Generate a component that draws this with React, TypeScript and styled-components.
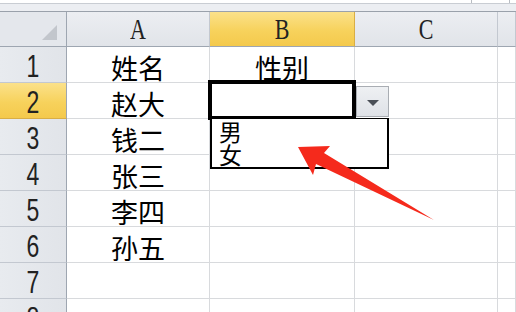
import { Fragment } from 'react';
import styled, { createGlobalStyle } from 'styled-components';

const GlobalStyle = createGlobalStyle`
    html, body {
        margin: 0;
        padding: 0;
        background: #ffffff;
        overflow: hidden;
    }
`;

const Sheet = styled.div`
    position: relative;
    width: 516px;
    height: 312px;
    overflow: hidden;
    background: #ffffff;
    font-family: "Liberation Sans", "Noto Sans CJK SC", sans-serif;
`;

const FormulaStrip = styled.div`
    height: 12px;
    box-sizing: border-box;
    background: linear-gradient(#ffffff 0 3px, #c9cdd3 3px 4px, #eceef2 4px);
    border-bottom: 1px solid #9aa1ab;
    display: flex;
    justify-content: flex-end;
    padding-right: 6px;
`;

const FormulaBox = styled.div`
    width: 37px;
    height: 3px;
    border-left: 1px solid #b8bcc2;
    border-right: 1px solid #b8bcc2;
    background: #ffffff;
`;

const Grid = styled.div`
    display: grid;
    grid-template-columns: 67px 143px 145px 143px 1fr;
    grid-template-rows: 35px;
    grid-auto-rows: 36px;
`;

const Corner = styled.div`
    position: relative;
    box-sizing: border-box;
    background: #e4e7ec;
    border-right: 1px solid #9ea6b1;
    border-bottom: 1px solid #9ea6b1;

    &::after {
        content: "";
        position: absolute;
        right: 9px;
        bottom: 6px;
        width: 0;
        height: 0;
        border-left: 15px solid transparent;
        border-bottom: 15px solid #c2c6cc;
    }
`;

const ColHeader = styled.div<{ $active?: boolean }>`
    box-sizing: border-box;
    display: flex;
    align-items: center;
    justify-content: center;
    background: ${p => p.$active
        ? 'linear-gradient(#fbe18a, #f7d25c 55%, #f4c94c)'
        : 'linear-gradient(#eceef2, #e1e4e9)'};
    border-right: 1px solid ${p => p.$active ? '#d9ae45' : '#c3c8d0'};
    border-bottom: 1px solid #9ea6b1;
    font-family: "Liberation Serif", serif;
    font-size: 22px;
    color: #222222;

    span {
        display: inline-block;
        transform: scaleY(1.35);
        margin-top: 2px;
    }
`;

const RowHeader = styled.div<{ $active?: boolean }>`
    box-sizing: border-box;
    display: flex;
    align-items: center;
    justify-content: center;
    background: ${p => p.$active
        ? 'linear-gradient(#fbe18a, #f7d25c 55%, #f4c94c)'
        : 'linear-gradient(90deg, #e8ebef, #e1e4e9)'};
    border-right: 1px solid #9ea6b1;
    border-bottom: 1px solid ${p => p.$active ? '#d9ae45' : '#c3c8d0'};
    font-family: "Liberation Sans", sans-serif;
    font-size: 23px;
    color: #222222;

    span {
        display: inline-block;
        transform: scaleY(1.35);
        margin-top: 4px;
    }
`;

const Cell = styled.div`
    box-sizing: border-box;
    display: flex;
    align-items: center;
    justify-content: center;
    border-right: 1px solid #d8dadd;
    border-bottom: 1px solid #d8dadd;
    font-family: "Noto Sans CJK SC", "Liberation Sans", sans-serif;
    font-size: 27px;
    line-height: 1;
    color: #000000;
    padding-top: 5px;
    white-space: nowrap;
`;

const Selection = styled.div`
    position: absolute;
    left: 208px;
    top: 80px;
    width: 148px;
    height: 40px;
    box-sizing: border-box;
    border: 4px solid #000000;
`;

const DropButton = styled.div`
    position: absolute;
    left: 356px;
    top: 86px;
    width: 33px;
    height: 31px;
    box-sizing: border-box;
    border: 1px solid #a9adb3;
    background: linear-gradient(#eef0f3, #dfe2e7);
    display: flex;
    align-items: center;
    justify-content: center;

    &::after {
        content: "";
        width: 0;
        height: 0;
        border-left: 6px solid transparent;
        border-right: 6px solid transparent;
        border-top: 6px solid #4a4f57;
        margin-top: 2px;
    }
`;

const DropList = styled.ul`
    position: absolute;
    left: 210px;
    top: 118px;
    width: 179px;
    height: 51px;
    box-sizing: border-box;
    margin: 0;
    padding: 1px 0 0 7px;
    list-style: none;
    background: #ffffff;
    border: 2px solid #000000;
    border-top-width: 1px;
    font-family: "Noto Sans CJK SC", sans-serif;
    font-size: 23px;
    line-height: 23px;
    color: #000000;
`;

const ArrowLayer = styled.svg`
    position: absolute;
    left: 0;
    top: 0;
    pointer-events: none;
`;

const names = ['姓名', '赵大', '钱二', '张三', '李四', '孙五', '', ''];

const App = () => {
    return (
        <Sheet>
            <GlobalStyle />
            <FormulaStrip>
                <FormulaBox />
            </FormulaStrip>
            <Grid>
                <Corner />
                <ColHeader><span>A</span></ColHeader>
                <ColHeader $active><span>B</span></ColHeader>
                <ColHeader><span>C</span></ColHeader>
                <ColHeader />
                {names.map((name, i) => (
                    <Fragment key={i}>
                        <RowHeader $active={i === 1}><span>{i + 1}</span></RowHeader>
                        <Cell>{name}</Cell>
                        <Cell>{i === 0 ? '性别' : ''}</Cell>
                        <Cell />
                        <Cell />
                    </Fragment>
                ))}
            </Grid>
            <Selection />
            <DropButton />
            <DropList>
                <li>男</li>
                <li>女</li>
            </DropList>
            <ArrowLayer width="516" height="312" viewBox="0 0 516 312">
                <polygon
                    points="298,147 330,146 324,153 434,220 316,164 313,175"
                    fill="#f52a1c"
                />
            </ArrowLayer>
        </Sheet>
    );
}

export default App;
